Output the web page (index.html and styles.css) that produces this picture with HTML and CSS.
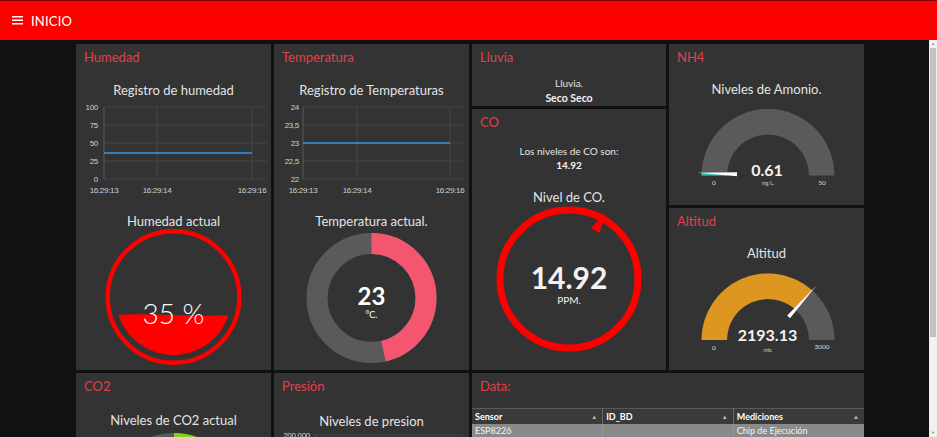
FILE: index.html
```html
<!DOCTYPE html>
<html lang="es">
<head>
<meta charset="utf-8">
<title>INICIO</title>
<link rel="stylesheet" href="styles.css">
</head>
<body>
<header class="topbar">
  <svg class="menu-icon" width="11" height="9" viewBox="0 0 11 9"><rect y="0" width="11" height="1.5"/><rect y="3.5" width="11" height="1.5"/><rect y="7" width="11" height="1.5"/></svg>
  <span class="topbar-title">INICIO</span>
</header>
<div class="workspace">
  <main class="content">
    <div class="dash">
      <!-- Humedad -->
      <section class="card">
        <h2 class="card-title">Humedad</h2>
        <div class="widget-label lbl-chart">Registro de humedad</div>
        <svg class="chart" width="195" height="100" viewBox="0 0 195 100">
          <g class="grid">
            <line x1="28" y1="8" x2="191" y2="8"/><line x1="28" y1="26" x2="191" y2="26"/><line x1="28" y1="44" x2="191" y2="44"/><line x1="28" y1="62" x2="191" y2="62"/><line x1="28" y1="80" x2="191" y2="80"/>
            <line x1="81" y1="8" x2="81" y2="80"/><line x1="176" y1="8" x2="176" y2="80"/>
          </g>
          <line class="axis" x1="28" y1="8" x2="28" y2="80"/>
          <g class="tick tick-y">
            <text x="22" y="11">100</text><text x="22" y="29">75</text><text x="22" y="47">50</text><text x="22" y="65">25</text><text x="22" y="83">0</text>
          </g>
          <g class="tick tick-x">
            <text x="28" y="94">16:29:13</text><text x="81" y="94">16:29:14</text><text x="176" y="94">16:29:16</text>
          </g>
          <line class="series" x1="28" y1="54" x2="176" y2="54"/>
        </svg>
        <div class="widget-label lbl-gauge">Humedad actual</div>
        <svg class="gauge" width="195" height="140" viewBox="0 0 195 140">
          <defs><clipPath id="liquidClip"><circle cx="97.5" cy="68" r="58"/></clipPath></defs>
          <circle cx="97.5" cy="68" r="65.8" fill="none" stroke="#ff0000" stroke-width="4.4"/>
          <path clip-path="url(#liquidClip)" fill="#ff0000" d="M 30 86 Q 63.75 84.5 97.5 86 T 165 86 V 140 H 30 Z"/>
          <text class="liquid-text" x="97.5" y="95">35 %</text>
        </svg>
      </section>

      <!-- Temperatura -->
      <section class="card">
        <h2 class="card-title">Temperatura</h2>
        <div class="widget-label lbl-chart">Registro de Temperaturas</div>
        <svg class="chart" width="195" height="100" viewBox="0 0 195 100">
          <g class="grid">
            <line x1="29" y1="8" x2="189" y2="8"/><line x1="29" y1="26" x2="189" y2="26"/><line x1="29" y1="44" x2="189" y2="44"/><line x1="29" y1="62" x2="189" y2="62"/><line x1="29" y1="80" x2="189" y2="80"/>
            <line x1="83" y1="8" x2="83" y2="80"/><line x1="176" y1="8" x2="176" y2="80"/>
          </g>
          <line class="axis" x1="29" y1="8" x2="29" y2="80"/>
          <g class="tick tick-y">
            <text x="25" y="11">24</text><text x="25" y="29">23,5</text><text x="25" y="47">23</text><text x="25" y="65">22,5</text><text x="25" y="83">22</text>
          </g>
          <g class="tick tick-x">
            <text x="29" y="94">16:29:13</text><text x="83" y="94">16:29:14</text><text x="176" y="94">16:29:16</text>
          </g>
          <line class="series" x1="29" y1="44" x2="176" y2="44"/>
        </svg>
        <div class="widget-label lbl-gauge">Temperatura actual.</div>
        <svg class="gauge" width="195" height="140" viewBox="0 0 195 140">
          <circle cx="97.5" cy="69" r="54.5" fill="none" stroke="#5a5a5a" stroke-width="21"/>
          <circle cx="97.5" cy="69" r="54.5" fill="none" stroke="#f4566f" stroke-width="21" stroke-dasharray="158.8 400" transform="rotate(-90 97.5 69)"/>
          <text class="donut-value" x="97.5" y="76">23</text>
          <text class="donut-unit" x="97.5" y="89">°C.</text>
        </svg>
      </section>

      <!-- Lluvia + CO -->
      <div class="stack">
        <section class="card card-lluvia">
          <h2 class="card-title">Lluvia</h2>
          <div class="text-widget tw-lluvia">
            <span>Lluvia.</span>
            <strong>Seco Seco</strong>
          </div>
        </section>
        <section class="card card-co">
          <h2 class="card-title">CO</h2>
          <div class="text-widget tw-co">
            <span>Los niveles de CO son:</span>
            <strong>14.92</strong>
          </div>
          <div class="widget-label lbl-co">Nivel de CO.</div>
          <svg class="gauge" width="194" height="155" viewBox="0 0 194 155">
            <circle cx="97" cy="74" r="69" fill="none" stroke="#ff0000" stroke-width="7"/>
            <polygon fill="#ff0000" points="133.4,7.3 127.7,28.1 118.9,23.3"/>
            <text class="co-value" x="97" y="84">14.92</text>
            <text class="co-unit" x="97" y="99">PPM.</text>
          </svg>
        </section>
      </div>

      <!-- NH4 + Altitud -->
      <div class="stack">
        <section class="card card-nh4">
          <h2 class="card-title">NH4</h2>
          <div class="widget-label lbl-semi">Niveles de Amonio.</div>
          <svg class="gauge" width="195" height="100" viewBox="0 0 195 100">
            <path fill="#5a5a5a" d="M 32.5 78.5 A 66.5 66.5 0 0 1 165.5 78.5 L 140 78.5 A 41 41 0 0 0 58 78.5 Z"/>
            <path fill="#2bbfb2" d="M 32.5 78.5 A 66.5 66.5 0 0 1 32.55 75.95 L 58.03 76.93 A 41 41 0 0 0 58 78.5 Z"/>
            <polygon class="needle" points="68.08,75.31 67.96,79.31 28.05,75.77"/>
            <text class="semi-value" x="98" y="79">0.61</text>
            <text class="semi-tick" x="45" y="88">0</text>
            <text class="semi-unit" x="99" y="88">mg/L.</text>
            <text class="semi-tick" x="153" y="88">50</text>
          </svg>
        </section>
        <section class="card card-alt">
          <h2 class="card-title">Altitud</h2>
          <div class="widget-label lbl-semi">Altitud</div>
          <svg class="gauge" width="195" height="105" viewBox="0 0 195 105">
            <path fill="#5a5a5a" d="M 32.5 79 A 66.5 66.5 0 0 1 165.5 79 L 140 79 A 41 41 0 0 0 58 79 Z"/>
            <path fill="#dd9720" d="M 32.5 79 A 66.5 66.5 0 0 1 143.15 29.27 L 126.22 48.34 A 41 41 0 0 0 58 79 Z"/>
            <polygon class="needle" points="121.0,57.2 118.2,54.5 147.46,24.41"/>
            <text class="semi-value" x="98.5" y="80">2193.13</text>
            <text class="semi-tick" x="45" y="89">0</text>
            <text class="semi-unit" x="99" y="91">mts.</text>
            <text class="semi-tick" x="153" y="88">3000</text>
          </svg>
        </section>
      </div>

      <!-- CO2 -->
      <section class="card">
        <h2 class="card-title">CO2</h2>
        <div class="widget-label lbl-row2">Niveles de CO2 actual</div>
        <svg class="gauge" width="195" height="140" viewBox="0 0 195 140">
          <circle cx="98" cy="70" r="54.5" fill="none" stroke="#5a5a5a" stroke-width="21"/>
          <circle cx="98" cy="70" r="54.5" fill="none" stroke="#7ed31e" stroke-width="21" stroke-dasharray="100 400" transform="rotate(-90 98 70)"/>
        </svg>
      </section>

      <!-- Presión -->
      <section class="card">
        <h2 class="card-title">Presión</h2>
        <div class="widget-label lbl-row2b">Niveles de presion</div>
        <svg class="chart" width="195" height="100" viewBox="0 0 195 100">
          <g class="grid">
            <line x1="41" y1="6" x2="189" y2="6"/><line x1="41" y1="24" x2="189" y2="24"/><line x1="41" y1="42" x2="189" y2="42"/><line x1="41" y1="60" x2="189" y2="60"/><line x1="41" y1="78" x2="189" y2="78"/>
          </g>
          <line class="axis" x1="41" y1="6" x2="41" y2="78"/>
          <g class="tick tick-y">
            <text x="36" y="9">200,000</text>
          </g>
        </svg>
      </section>

      <!-- Data -->
      <section class="card card-data">
        <h2 class="card-title">Data:</h2>
        <table class="data-table">
          <thead>
            <tr>
              <th><div class="th-inner"><span>Sensor</span><span class="sort">▲</span></div></th>
              <th><div class="th-inner"><span>ID_BD</span><span class="sort">▲</span></div></th>
              <th><div class="th-inner"><span>Mediciones</span><span class="sort">▲</span></div></th>
            </tr>
          </thead>
          <tbody>
            <tr><td>ESP8226</td><td></td><td>Chip de Ejecución</td></tr>
          </tbody>
        </table>
      </section>
    </div>
  </main>
  <aside class="scrollbar">
    <div class="sb-btn">▲</div>
    <div class="sb-thumb"></div>
    <div class="sb-track"></div>
    <div class="sb-btn">▼</div>
  </aside>
</div>
</body>
</html>
```

FILE: styles.css
```css
* { box-sizing: border-box; }

html, body {
  margin: 0;
  height: 100%;
}

body {
  background: #111111;
  font-family: "Lato", "Open Sans", sans-serif;
  color: #e6e6e6;
  display: flex;
  flex-direction: column;
  overflow: hidden;
}

/* Top bar */
.topbar {
  flex: none;
  height: 40px;
  background: #ff0000;
  border-top: 1px solid #7a0000;
  display: flex;
  align-items: center;
  gap: 8px;
  padding-left: 12px;
  color: #ffffff;
}

.menu-icon {
  display: block;
  fill: #ffffff;
}

.topbar-title {
  font-size: 13px;
  letter-spacing: 0.2px;
}

/* Workspace */
.workspace {
  flex: 1;
  display: flex;
  min-height: 0;
}

.content {
  flex: 1;
  overflow: hidden;
  padding: 4px 0 0 76px;
}

.dash {
  display: grid;
  grid-template-columns: 195px 195px 194px 195px;
  grid-template-rows: 326px 200px;
  gap: 3px;
}

.stack {
  display: flex;
  flex-direction: column;
  gap: 3px;
  min-height: 0;
}

.card {
  background: #333333;
  display: flex;
  flex-direction: column;
  align-items: center;
  overflow: hidden;
  min-height: 0;
}

.card-lluvia { flex: none; height: 62px; }
.card-co { flex: 1; }
.card-nh4 { flex: none; height: 161px; }
.card-alt { flex: 1; }
.card-data { grid-column: 3 / span 2; }

.card-title {
  align-self: stretch;
  margin: 0;
  padding: 4px 8px;
  line-height: 18px;
  font-size: 13px;
  font-weight: normal;
  color: #e0404b;
}

.widget-label {
  font-size: 13px;
  color: #e4e4e4;
  text-align: center;
}

.lbl-chart { margin-top: 11px; line-height: 18px; }
.lbl-gauge { margin-top: 14px; line-height: 16px; }
.lbl-co { margin-top: 17px; line-height: 16px; }
.lbl-semi { margin-top: 11px; line-height: 16px; }
.lbl-row2 { margin-top: 13px; line-height: 16px; }
.lbl-row2b { margin-top: 14px; line-height: 16px; }

.chart, .gauge {
  display: block;
  flex: none;
  overflow: visible;
}

.text-widget {
  display: flex;
  flex-direction: column;
  align-items: center;
  font-size: 10px;
  color: #e6e6e6;
}

.text-widget strong {
  font-weight: bold;
  color: #f4f4f4;
}

.tw-lluvia { margin-top: 6px; line-height: 15px; }
.tw-lluvia strong { font-size: 10.5px; }
.tw-co { margin-top: 9px; line-height: 14px; }

/* Charts */
.grid line {
  stroke: #474747;
  stroke-width: 1;
}

.axis {
  stroke: #5a5a5a;
  stroke-width: 1;
}

.series {
  stroke: #2f7fc1;
  stroke-width: 2;
}

.tick {
  font: 8px "Liberation Sans", Arial, sans-serif;
  fill: #d0d0d0;
  letter-spacing: -0.3px;
}

.tick-y { text-anchor: end; }
.tick-x { text-anchor: middle; }

/* Gauges */
.liquid-text {
  font: 300 28px "Lato", sans-serif;
  fill: #ffffff;
  text-anchor: middle;
}

.donut-value {
  font: bold 24px "Lato", sans-serif;
  fill: #ffffff;
  text-anchor: middle;
}

.donut-unit {
  font: 9px "Lato", sans-serif;
  fill: #ffffff;
  text-anchor: middle;
}

.co-value {
  font: bold 30px "Lato", sans-serif;
  fill: #f2f2f2;
  text-anchor: middle;
}

.co-unit {
  font: 10px "Lato", sans-serif;
  fill: #f2f2f2;
  text-anchor: middle;
}

.needle { fill: #ffffff; }

.semi-value {
  font: bold 16px "Lato", sans-serif;
  fill: #f4f4f4;
  text-anchor: middle;
}

.semi-tick {
  font: 6.5px "Lato", sans-serif;
  fill: #dddddd;
  text-anchor: middle;
}

.semi-unit {
  font: 5px "Lato", sans-serif;
  fill: #cccccc;
  text-anchor: middle;
}

/* Data table */
.data-table {
  align-self: stretch;
  margin-top: 9px;
  width: 100%;
  border-collapse: collapse;
  table-layout: fixed;
  font-size: 9px;
}

.data-table th {
  height: 15px;
  padding: 0 3px;
  background: #3a3a3a;
  color: #ffffff;
  font-weight: bold;
  text-align: left;
  border-top: 1px solid #5a5a5a;
  border-right: 1px solid #6a6a6a;
}

.data-table th:last-child { border-right: none; }

.th-inner {
  display: flex;
  justify-content: space-between;
  align-items: center;
}

.sort {
  font-size: 6px;
  color: #bbbbbb;
  padding-right: 2px;
}

.data-table td {
  height: 14px;
  padding: 0 3px;
  background: #8a8a8a;
  color: #f4f4f4;
  border-right: 1px solid #969696;
}

.data-table td:last-child { border-right: none; }

/* Scrollbar */
.scrollbar {
  flex: none;
  width: 8px;
  display: flex;
  flex-direction: column;
  background: #f1f1f1;
}

.sb-btn {
  flex: none;
  height: 8px;
  font-size: 4px;
  line-height: 8px;
  text-align: center;
  color: #8a8a8a;
}

.sb-thumb {
  flex: none;
  height: 289px;
  margin: 0 1px;
  background: #c1c1c1;
}

.sb-track { flex: 1; }
```
